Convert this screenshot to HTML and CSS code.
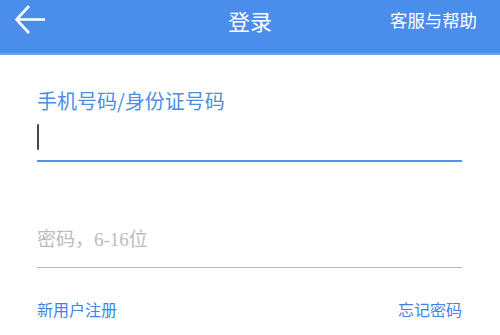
FILE: index.html
```html
<!DOCTYPE html>
<html lang="zh-CN">
<head>
<meta charset="utf-8">
<title>登录</title>
<link rel="stylesheet" href="styles.css">
</head>
<body>
<header class="topbar">
  <div class="topbar-row">
    <div class="back">
      <svg class="back-icon" width="32" height="32" viewBox="0 0 32 32" aria-hidden="true">
        <path d="M2.5 15.5 H31 M15 2 L2.5 15.5 L15 29" fill="none" stroke="#ffffff" stroke-width="2.6" stroke-linecap="butt" stroke-linejoin="miter"/>
      </svg>
    </div>
    <h1 class="title">登录</h1>
    <div class="help">客服与帮助</div>
  </div>
</header>
<main class="form">
  <div class="field field-active">
    <div class="field-label">手机号码/身份证号码</div>
    <div class="field-input"><span class="caret"></span></div>
  </div>
  <div class="field field-password">
    <div class="placeholder">密码，6-16位</div>
  </div>
  <div class="links">
    <a class="link">新用户注册</a>
    <a class="link">忘记密码</a>
  </div>
</main>
</body>
</html>
```
FILE: styles.css
```css
html, body {
  margin: 0;
  padding: 0;
  background: #ffffff;
}
body {
  width: 500px;
  height: 335px;
  overflow: hidden;
  font-family: "Noto Sans CJK SC", "Noto Sans", sans-serif;
}
.topbar {
  background: #4b8deb;
  height: 53px;
  border-bottom: 2px solid #68a4f3;
}
.topbar-row {
  display: grid;
  grid-template-columns: 1fr auto 1fr;
  align-items: center;
  height: 40px;
}
.back {
  padding-left: 14px;
  display: flex;
  align-items: center;
}
.back-icon {
  display: block;
}
.title {
  margin: 0;
  font-size: 22px;
  font-weight: 400;
  line-height: 40px;
  color: #ffffff;
}
.help {
  justify-self: end;
  padding-right: 23px;
  font-size: 17.4px;
  line-height: 40px;
  color: #ffffff;
}
.form {
  padding: 0 38px 0 37px;
}
.field-active {
  margin-top: 34px;
}
.field-label {
  font-size: 20px;
  line-height: 24px;
  color: #4a8fe6;
}
.field-input {
  margin-top: 11px;
  padding-bottom: 10px;
  border-bottom: 2px solid #4d93ec;
  display: flex;
}
.caret {
  display: block;
  width: 2px;
  height: 26px;
  background: #434854;
  border-radius: 1px;
}
.field-password {
  margin-top: 66px;
  padding-bottom: 15px;
  border-bottom: 1px solid #b4b4b4;
}
.placeholder {
  font-family: "Liberation Serif", "Noto Sans CJK SC", serif;
  font-size: 19px;
  line-height: 24px;
  color: #bcbcbc;
}
.links {
  margin-top: 31px;
  display: flex;
  justify-content: space-between;
}
.link {
  font-size: 16px;
  line-height: 20px;
  color: #3e86e6;
  text-decoration: none;
}
```
